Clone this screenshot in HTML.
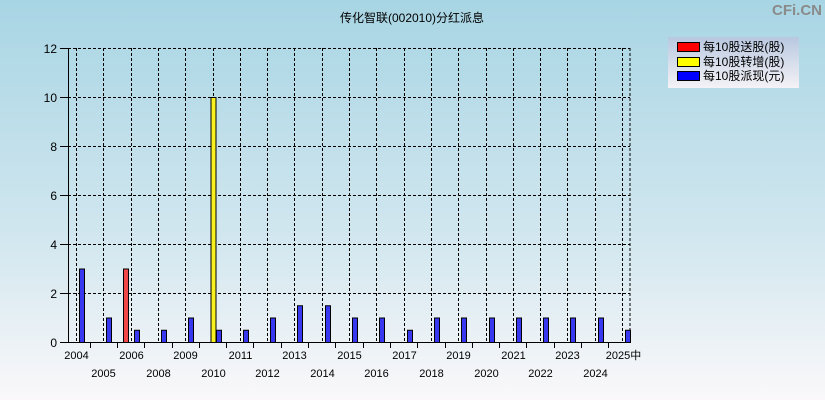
<!DOCTYPE html>
<html><head><meta charset="utf-8"><style>body{margin:0}svg{display:block}</style></head><body>
<svg width="825" height="400" xmlns="http://www.w3.org/2000/svg" font-family="Liberation Sans, Noto Sans CJK SC, sans-serif">
<defs>
<linearGradient id="bg" x1="0" y1="0" x2="0" y2="1"><stop offset="0" stop-color="#a8d5e4"/><stop offset="0.6" stop-color="#d2e7ef"/><stop offset="1" stop-color="#faf8fa"/></linearGradient>
<linearGradient id="lg" x1="0" y1="0" x2="0" y2="1"><stop offset="0" stop-color="#b8c8e0"/><stop offset="1" stop-color="#f4f2f6"/></linearGradient>
</defs>
<rect width="825" height="400" fill="url(#bg)"/>
<text x="412" y="22" font-size="12" text-anchor="middle" fill="#000">传化智联(002010)分红派息</text>
<text x="822" y="15" font-size="15" text-anchor="end" fill="#8a8a8a" font-weight="bold">CFi.CN</text>
<g stroke="#000" stroke-dasharray="3,2" stroke-width="1">
<line x1="68" y1="48.5" x2="630" y2="48.5"/><line x1="68" y1="97.5" x2="630" y2="97.5"/><line x1="68" y1="146.5" x2="630" y2="146.5"/><line x1="68" y1="195.5" x2="630" y2="195.5"/><line x1="68" y1="244.5" x2="630" y2="244.5"/><line x1="68" y1="293.5" x2="630" y2="293.5"/>
<line x1="630" y1="48" x2="630" y2="342"/>
</g>
<g id="vl" stroke="#000" stroke-dasharray="3,2"></g>
<g stroke="#000"><line x1="68.5" y1="48" x2="68.5" y2="342"/><line x1="60" y1="342.5" x2="630" y2="342.5"/>
<line x1="60" y1="48.5" x2="68" y2="48.5"/><line x1="60" y1="97.5" x2="68" y2="97.5"/><line x1="60" y1="146.5" x2="68" y2="146.5"/><line x1="60" y1="195.5" x2="68" y2="195.5"/><line x1="60" y1="244.5" x2="68" y2="244.5"/><line x1="60" y1="293.5" x2="68" y2="293.5"/></g>
<g font-size="12" text-anchor="end"><text x="57" y="53">12</text><text x="57" y="102">10</text><text x="57" y="151">8</text><text x="57" y="200">6</text><text x="57" y="249">4</text><text x="57" y="298">2</text><text x="57" y="347">0</text></g>
<g id="bars" stroke="#000" stroke-width="1"></g>
<g id="lbl" font-size="11" text-anchor="middle"></g>
<rect x="668" y="37" width="131" height="51" fill="url(#lg)"/>
<rect x="677.5" y="42.5" width="22" height="9" fill="#f00" stroke="#000"/>
<rect x="677.5" y="57.5" width="22" height="9" fill="#ff0" stroke="#000"/>
<rect x="677.5" y="71.5" width="22" height="9" fill="#00f" stroke="#000"/>
<g font-size="12"><text x="703" y="51">每10股送股(股)</text><text x="703" y="66">每10股转增(股)</text><text x="703" y="80">每10股派现(元)</text></g>
<script>
var ns="http://www.w3.org/2000/svg";
var yrs=["2004","2005","2006","2008","2009","2010","2011","2012","2013","2014","2015","2016","2017","2018","2019","2020","2021","2022","2023","2024","2025中"];
var blue=[3,1,0.5,0.5,1,0.5,0.5,1,1.5,1.5,1,1,0.5,1,1,1,1,1,1,1,0.5];
var vl=document.getElementById("vl"),bars=document.getElementById("bars"),lbl=document.getElementById("lbl");
function el(p,t,a){var e=document.createElementNS(ns,t);for(var k in a)e.setAttribute(k,a[k]);p.appendChild(e);return e;}
for(var i=0;i<21;i++){
 var x=Math.round(76+27.3*i)+0.5;
 el(vl,"line",{x1:x,y1:48,x2:x,y2:342});
 if(i<20){var tx=Math.round(76+27.3*(i+0.5))+0.5;el(bars,"line",{x1:tx,y1:342,x2:tx,y2:348});}
 var b=blue[i];el(bars,"rect",{x:x+3,y:342.5-b*24.5,width:5,height:b*24.5,fill:"#3838f0"});
 if(i==2)el(bars,"rect",{x:x-8,y:342.5-73.5,width:5,height:73.5,fill:"#f04848"});
 if(i==5)el(bars,"rect",{x:x-2.5,y:342.5-245,width:5,height:245,fill:"#f8f020"});
 var t=el(lbl,"text",{x:x-(i==20?-1:0),y:i%2==0?359:377});t.textContent=yrs[i];
}
</script>
</svg>
</body></html>
